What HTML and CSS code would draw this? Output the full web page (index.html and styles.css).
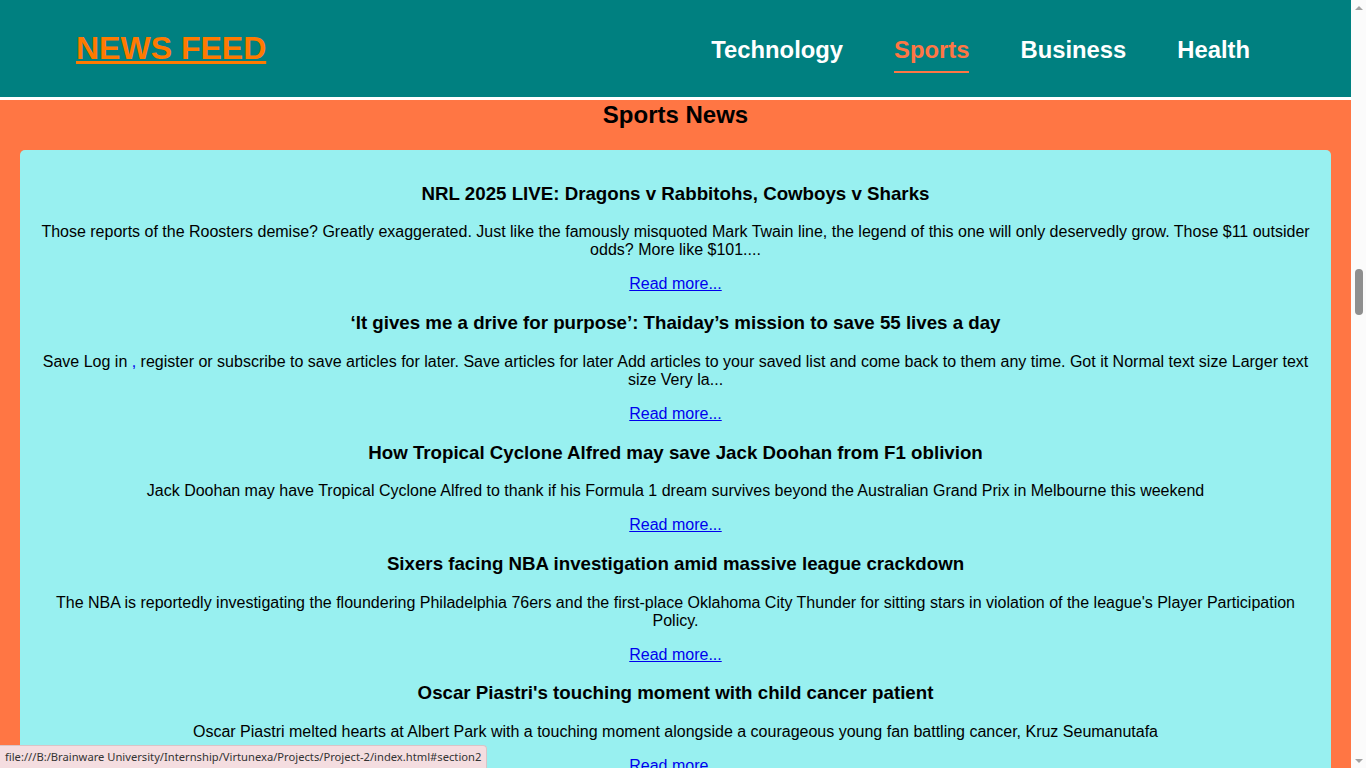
FILE: index.html
```html
<!DOCTYPE html>
<html lang="en">
<head>
<meta charset="utf-8">
<title>News Feed</title>
<link rel="stylesheet" href="styles.css">
</head>
<body>
<div class="page">
  <header class="site-header">
    <h1 class="logo"><a href="#">NEWS FEED</a></h1>
    <nav class="nav">
      <a href="#section1" class="nav-link">Technology</a>
      <a href="#section2" class="nav-link active">Sports</a>
      <a href="#section3" class="nav-link">Business</a>
      <a href="#section4" class="nav-link">Health</a>
    </nav>
  </header>
  <main class="content">
    <section class="section" id="section2">
      <h2 class="section-title">Sports News</h2>
      <div class="card">
        <article class="article">
          <h3>NRL 2025 LIVE: Dragons v Rabbitohs, Cowboys v Sharks</h3>
          <p>Those reports of the Roosters demise? Greatly exaggerated. Just like the famously misquoted Mark Twain line, the legend of this one will only deservedly grow. Those $11 outsider odds? More like $101....</p>
          <div class="more"><a href="#">Read more...</a></div>
        </article>
        <article class="article">
          <h3>‘It gives me a drive for purpose’: Thaiday’s mission to save 55 lives a day</h3>
          <p>Save Log in <span class="blue">,</span> register or subscribe to save articles for later. Save articles for later Add articles to your saved list and come back to them any time. Got it Normal text size Larger text size Very la...</p>
          <div class="more"><a href="#">Read more...</a></div>
        </article>
        <article class="article">
          <h3>How Tropical Cyclone Alfred may save Jack Doohan from F1 oblivion</h3>
          <p>Jack Doohan may have Tropical Cyclone Alfred to thank if his Formula 1 dream survives beyond the Australian Grand Prix in Melbourne this weekend</p>
          <div class="more"><a href="#">Read more...</a></div>
        </article>
        <article class="article">
          <h3>Sixers facing NBA investigation amid massive league crackdown</h3>
          <p>The NBA is reportedly investigating the floundering Philadelphia 76ers and the first-place Oklahoma City Thunder for sitting stars in violation of the league's Player Participation Policy.</p>
          <div class="more"><a href="#">Read more...</a></div>
        </article>
        <article class="article">
          <h3>Oscar Piastri's touching moment with child cancer patient</h3>
          <p>Oscar Piastri melted hearts at Albert Park with a touching moment alongside a courageous young fan battling cancer, Kruz Seumanutafa</p>
          <div class="more"><a href="#">Read more...</a></div>
        </article>
      </div>
    </section>
  </main>
</div>
<aside class="scrollbar" aria-hidden="true">
  <span class="arrow up"></span>
  <span class="track"><span class="thumb"></span></span>
  <span class="arrow down"></span>
</aside>
<div class="status-bar">file:///B:/Brainware University/Internship/Virtunexa/Projects/Project-2/index.html#section2</div>
</body>
</html>
```
FILE: styles.css
```css
html, body {
  height: 100%;
  overflow: hidden;
}
body {
  margin: 0;
  font-family: "Liberation Sans", Arial, sans-serif;
  background: #ff7644;
  color: #000;
  display: flex;
}
.page {
  flex: 1;
  min-width: 0;
  height: 100%;
  overflow: hidden;
}
.scrollbar {
  width: 15px;
  flex: none;
  height: 100%;
  background: #fbfbfb;
  display: flex;
  flex-direction: column;
  align-items: center;
}
.arrow {
  width: 15px;
  height: 15px;
  display: flex;
  align-items: center;
  justify-content: center;
  flex: none;
}
.arrow::before {
  content: "";
  border-left: 4px solid transparent;
  border-right: 4px solid transparent;
}
.arrow.up::before {
  border-bottom: 4px solid #a3a3a3;
}
.arrow.down::before {
  border-top: 4px solid #a3a3a3;
}
.track {
  flex: 1;
  width: 15px;
  display: flex;
  justify-content: center;
}
.thumb {
  width: 8px;
  height: 46px;
  margin-top: 254px;
  margin-left: 1px;
  background: #8f8f8f;
  border-radius: 4px;
}
.site-header {
  background: #008080;
  height: 97px;
  border-bottom: 3px solid #fff;
  display: flex;
  align-items: center;
  justify-content: space-between;
  padding: 0 101px 0 76px;
}
.logo {
  margin: 0;
  font-size: 32px;
  font-weight: bold;
}
.logo a {
  color: #ff7a00;
  text-decoration: underline;
}
.nav {
  display: flex;
  gap: 51px;
  align-items: center;
}
.nav-link {
  color: #fff;
  font-weight: bold;
  font-size: 23.8px;
  text-decoration: none;
  padding: 11px 0 7px;
  border-bottom: 2px solid transparent;
}
.nav-link.active {
  color: #ff7644;
  border-bottom-color: #ff7644;
}
.content {
  padding: 0 20px 40px;
}
.section-title {
  margin: 0;
  padding-top: 1px;
  font-size: 24px;
  text-align: center;
  margin-bottom: 21px;
}
.card {
  background: #98f0f0;
  border-radius: 5px;
  padding: 14px 20px 20px;
  text-align: center;
}
.article h3 {
  font-size: 18.72px;
  margin: 18.72px 0;
}
.article p {
  font-size: 16px;
  margin: 16px 0;
}
.more {
  font-size: 16px;
}
.more a {
  color: #0000ee;
}
.blue {
  color: #0000ee;
}
.status-bar {
  position: fixed;
  left: 0;
  bottom: 0;
  background: #f4dde0;
  color: #333;
  border: 1px solid #d9c4c7;
  border-left: none;
  border-bottom: none;
  border-top-right-radius: 4px;
  font-family: "Noto Sans", "Open Sans", sans-serif;
  font-size: 11.2px;
  padding: 3px 5px;
  line-height: 16px;
}
```
